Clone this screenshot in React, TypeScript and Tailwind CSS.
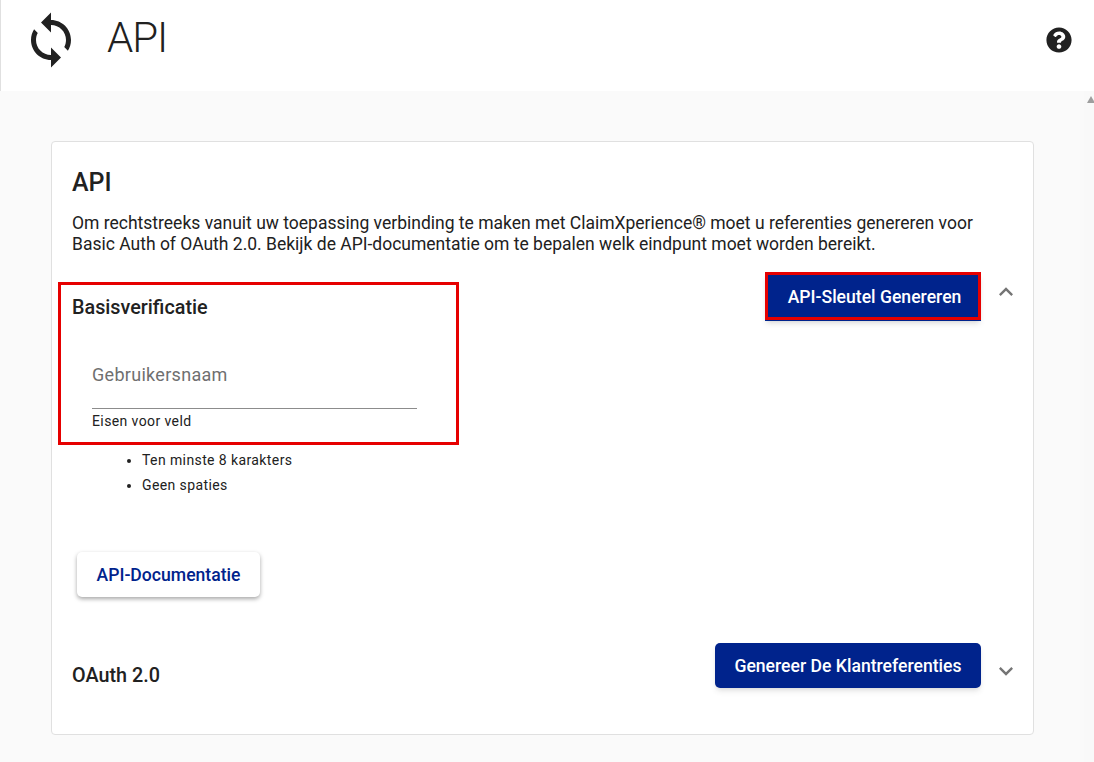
import { FaQuestionCircle } from "react-icons/fa";

function Chevron({ up, className }: { up?: boolean; className: string }) {
  return (
    <svg width="28" height="28" viewBox="0 0 24 24" fill="#757575" className={className}>
      <path d={up ? "M12 8l-6 6 1.41 1.41L12 10.83l4.59 4.58L18 14z" : "M16.59 8.59L12 13.17 7.41 8.59 6 10l6 6 6-6z"} />
    </svg>
  );
}

export default function App() {
  return (
    <div className="w-[1094px] h-[762px] overflow-hidden relative bg-[#fafafa] text-[#212121] font-['Roboto',sans-serif]">
      <header className="h-[91px] bg-white border-l border-[#e0e0e0] flex items-center pl-5 pr-[22px]">
        <svg width="60" height="60" viewBox="0 0 24 24" fill="#212121" className="shrink-0 mb-[11px]">
          <path d="M12 4V1L8 5l4 4V6c3.31 0 6 2.69 6 6 0 1.01-.25 1.97-.7 2.8l1.46 1.46C19.54 15.03 20 13.57 20 12c0-4.42-3.58-8-8-8zm0 14c-3.31 0-6-2.69-6-6 0-1.01.25-1.97.7-2.8L5.24 7.74C4.46 8.97 4 10.43 4 12c0 4.42 3.58 8 8 8v3l4-4-4-4v3z" />
        </svg>
        <h1 className="ml-[26px] mb-[16px] text-[42px] leading-none font-light tracking-[-1px]">API</h1>
        <FaQuestionCircle className="ml-auto mb-[12px] text-[#212121]" size={26} />
      </header>

      <div className="flex">
        <main className="pl-[51px] pt-[50px]">
          <section className="w-[983px] h-[594px] bg-white border border-[#e0e0e0] rounded-[4px] pl-5 pr-[13px] pt-[25px]">
            <h2 className="text-[25px] leading-[32px] font-medium">API</h2>
            <p className="mt-[14px] text-[17.5px] leading-[21px] w-[930px]">
              Om rechtstreeks vanuit uw toepassing verbinding te maken met ClaimXperience® moet u referenties genereren voor Basic Auth of OAuth 2.0. Bekijk de API-documentatie om te bepalen welk eindpunt moet worden bereikt.
            </p>

            <div className="mt-[18px] flex justify-between items-start">
              <h3 className="mt-[23px] text-[19.8px] leading-[24px] font-medium">Basisverificatie</h3>
              <div className="flex items-center gap-[11px]">
                <button className="h-[48px] w-[216px] pl-[3px] bg-[#00238c] text-white text-[17.6px] font-medium shadow-md">API-Sleutel Genereren</button>
                <Chevron up className="shrink-0 mb-[10px]" />
              </div>
            </div>

            <div className="mt-[42px] ml-5 w-[325px]">
              <div className="h-[46px] border-b border-[#8c8c8c] text-[18px] leading-[24px] text-[#6f6f6f] tracking-[0.3px]">Gebruikersnaam</div>
              <div className="mt-[4px] text-[14px] leading-[16px] tracking-[0.4px]">Eisen voor veld</div>
            </div>
            <ul className="mt-[19px] ml-[70px] list-disc text-[14px] leading-[25px] tracking-[0.4px]">
              <li>Ten minste 8 karakters</li>
              <li>Geen spaties</li>
            </ul>

            <button className="mt-[54px] ml-[5px] h-[45px] w-[183px] pt-[2px] rounded-[5px] bg-white text-[#00238c] text-[17.6px] font-medium shadow-[0_2px_4px_rgba(0,0,0,0.35)]">API-Documentatie</button>

            <div className="mt-[46px] flex justify-between items-start">
              <h3 className="mt-[21px] text-[19.8px] leading-[24px] font-medium">OAuth 2.0</h3>
              <div className="flex items-center gap-[11px]">
                <button className="h-[45px] w-[266px] pt-[2px] rounded-[5px] bg-[#00238c] text-white text-[17.6px] font-medium shadow-md">Genereer De Klantreferenties</button>
                <Chevron className="shrink-0 mt-[10px]" />
              </div>
            </div>
          </section>
        </main>
      </div>

      <div className="absolute left-[58px] top-[282px] w-[401px] h-[163px] border-[3px] border-[#e60000] pointer-events-none" />
      <div className="absolute left-[765px] top-[272px] w-[216px] h-[48px] border-[3px] border-[#e60000] pointer-events-none" />
      <div className="absolute right-0 top-[91px] w-[10px] h-[671px] bg-[#f9f9f9]">
        <div className="ml-[3px] mt-[5px] w-0 h-0 border-x-[4px] border-x-transparent border-b-[7px] border-b-[#9e9e9e]" />
      </div>
    </div>
  );
}
